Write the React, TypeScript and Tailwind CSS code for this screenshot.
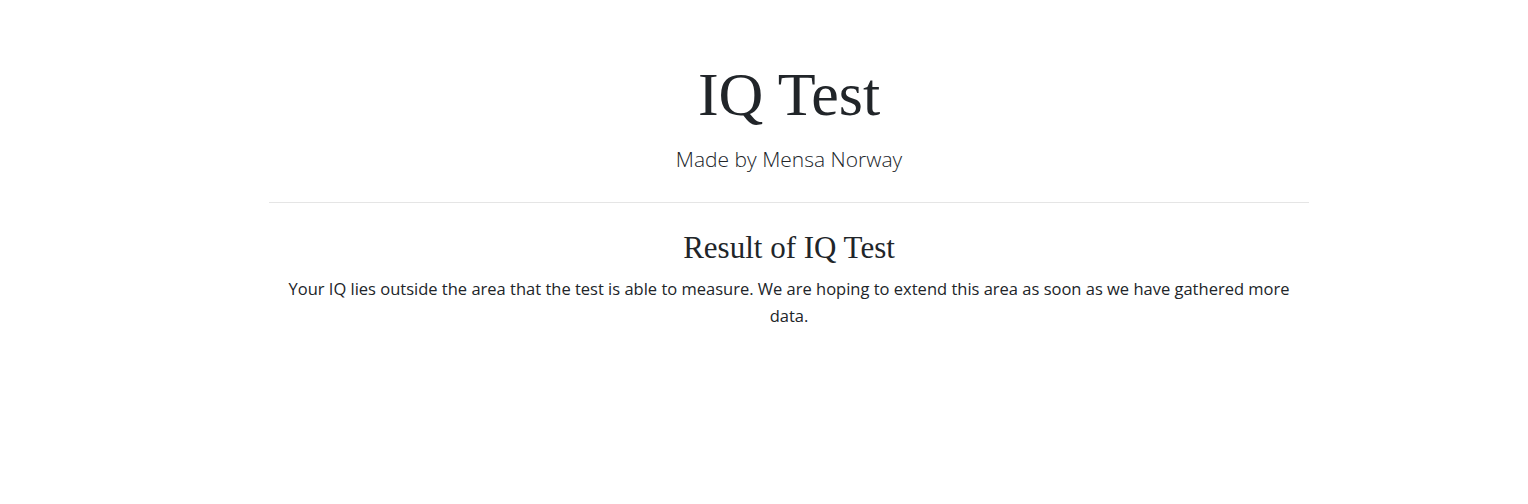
import React from 'react';

const App: React.FC = () => {
  return (
    <div className="min-h-[504px] bg-white pl-[50px] text-[#212529] font-['Open_Sans',sans-serif]">
      <div className="w-[1040px] mx-auto pt-[58px] text-center">
        {/* Page header */}
        <h1 className="font-['Liberation_Serif',serif] text-[62px] leading-[72px] mb-[14px]">IQ Test</h1>
        <p className="text-[21px] leading-[30px] font-light">Made by Mensa Norway</p>

        <hr className="mt-[28px] border-0 border-t border-black/10" />

        {/* Result */}
        <div className="px-3 pt-[27px]">
          <h2 className="font-['Liberation_Serif',serif] text-[31px] leading-[36px] mb-[9px]">Result of IQ Test</h2>
          <p className="text-[16.5px] leading-[27px]">
            Your IQ lies outside the area that the test is able to measure. We are hoping to extend this area as soon as we have gathered more data.
          </p>
        </div>
      </div>
    </div>
  );
};

export default App;
